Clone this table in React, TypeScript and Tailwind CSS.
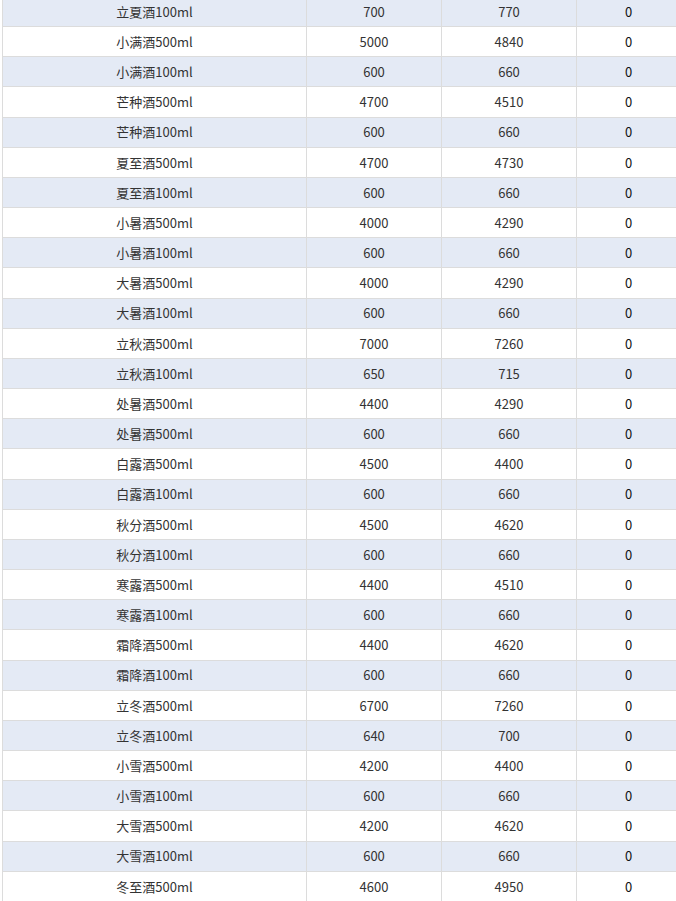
const rows: [string, string, string, string][] = [
  ["立夏酒100ml", "700", "770", "0"],
  ["小满酒500ml", "5000", "4840", "0"],
  ["小满酒100ml", "600", "660", "0"],
  ["芒种酒500ml", "4700", "4510", "0"],
  ["芒种酒100ml", "600", "660", "0"],
  ["夏至酒500ml", "4700", "4730", "0"],
  ["夏至酒100ml", "600", "660", "0"],
  ["小暑酒500ml", "4000", "4290", "0"],
  ["小暑酒100ml", "600", "660", "0"],
  ["大暑酒500ml", "4000", "4290", "0"],
  ["大暑酒100ml", "600", "660", "0"],
  ["立秋酒500ml", "7000", "7260", "0"],
  ["立秋酒100ml", "650", "715", "0"],
  ["处暑酒500ml", "4400", "4290", "0"],
  ["处暑酒500ml", "600", "660", "0"],
  ["白露酒500ml", "4500", "4400", "0"],
  ["白露酒100ml", "600", "660", "0"],
  ["秋分酒500ml", "4500", "4620", "0"],
  ["秋分酒100ml", "600", "660", "0"],
  ["寒露酒500ml", "4400", "4510", "0"],
  ["寒露酒100ml", "600", "660", "0"],
  ["霜降酒500ml", "4400", "4620", "0"],
  ["霜降酒100ml", "600", "660", "0"],
  ["立冬酒500ml", "6700", "7260", "0"],
  ["立冬酒100ml", "640", "700", "0"],
  ["小雪酒500ml", "4200", "4400", "0"],
  ["小雪酒100ml", "600", "660", "0"],
  ["大雪酒500ml", "4200", "4620", "0"],
  ["大雪酒100ml", "600", "660", "0"],
  ["冬至酒500ml", "4600", "4950", "0"],
];

export default function App() {
  return (
    <div className="h-[901px] w-[676px] overflow-hidden bg-white pl-[2px] font-['Noto_Sans_CJK_SC',sans-serif] text-[13px] text-[#333]">
      <div className="-mt-[3.2px] w-[680px] border-l border-[#dcdcdc]">
        {rows.map((r, i) => (
          <div
            key={i}
            className={`grid h-[30.18px] grid-cols-[304px_135px_135px_103px] border-b border-[#dcdcdc] ${
              i % 2 === 0 ? "bg-[#e4eaf5]" : "bg-white"
            }`}
          >
            <div className="flex items-center justify-center border-r border-[#dcdcdc]">{r[0]}</div>
            <div className="flex items-center justify-center border-r border-[#dcdcdc]">{r[1]}</div>
            <div className="flex items-center justify-center border-r border-[#dcdcdc]">{r[2]}</div>
            <div className="flex items-center justify-center text-[#111]">{r[3]}</div>
          </div>
        ))}
      </div>
    </div>
  );
}
